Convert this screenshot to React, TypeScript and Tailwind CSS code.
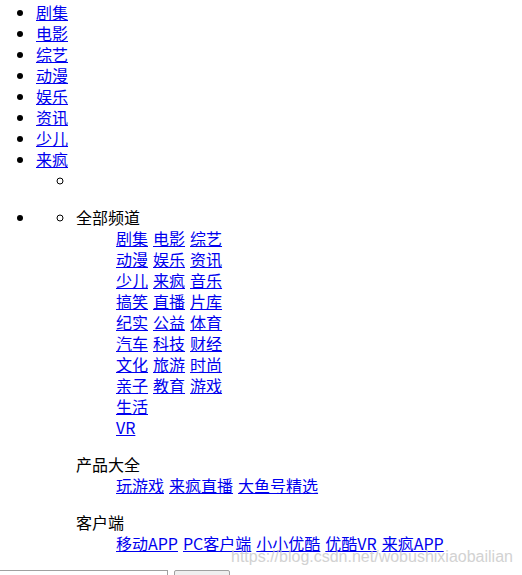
const topNav = ['剧集', '电影', '综艺', '动漫', '娱乐', '资讯', '少儿', '来疯'];

const channelRows = [
  ['剧集', '电影', '综艺'],
  ['动漫', '娱乐', '资讯'],
  ['少儿', '来疯', '音乐'],
  ['搞笑', '直播', '片库'],
  ['纪实', '公益', '体育'],
  ['汽车', '科技', '财经'],
  ['文化', '旅游', '时尚'],
  ['亲子', '教育', '游戏'],
  ['生活'],
  ['VR'],
];

const products = ['玩游戏', '来疯直播', '大鱼号精选'];
const clients = ['移动APP', 'PC客户端', '小小优酷', '优酷VR', '来疯APP'];

function Link({ children }: { children: React.ReactNode }) {
  return (
    <a href="#" className="text-[#0000ee] underline">
      {children}
    </a>
  );
}

function LinkRow({ items }: { items: string[] }) {
  return (
    <div className="flex gap-[5px]">
      {items.map((item) => (
        <Link key={item}>{item}</Link>
      ))}
    </div>
  );
}

export default function App() {
  return (
    <div
      className="relative h-[575px] overflow-hidden bg-white pt-[2px] text-[16px] leading-[21px] text-black"
      style={{ fontFamily: '"Noto Sans CJK SC", "Noto Sans", sans-serif' }}
    >
      <ul className="list-disc pl-9">
        {topNav.map((item, i) => (
          <li key={item}>
            <Link>{item}</Link>
            {i === topNav.length - 1 && (
              <ul className="list-[circle] pl-10">
                <li>&nbsp;</li>
              </ul>
            )}
          </li>
        ))}
      </ul>

      <ul className="mt-4 list-disc pl-9">
        <li>
          <ul className="list-[circle] pl-10">
            <li>
              <dl>
                <dt>全部频道</dt>
                <dd className="ml-10">
                  {channelRows.map((row, i) => (
                    <LinkRow key={i} items={row} />
                  ))}
                </dd>
              </dl>
              <dl className="mt-4">
                <dt>产品大全</dt>
                <dd className="ml-10">
                  <LinkRow items={products} />
                </dd>
              </dl>
              <dl className="mt-4">
                <dt>客户端</dt>
                <dd className="ml-10">
                  <LinkRow items={clients} />
                </dd>
              </dl>
            </li>
          </ul>
        </li>
      </ul>

      <div className="-ml-1 mt-4 flex items-start gap-[6px]">
        <input type="text" className="h-[24px] w-[172px] border border-[#a0a0a0] bg-white" />
        <button className="h-[24px] w-[56px] rounded-[2px] border border-[#a0a0a0] bg-[#efefef]" />
      </div>

      <div
        className="pointer-events-none absolute left-[231px] top-[547px] text-[16px] leading-[20px] text-[#c8c8c8] opacity-80"
        style={{ fontFamily: '"Liberation Sans", Arial, sans-serif' }}
      >
        https://blog.csdn.net/wobushixiaobailian
      </div>
    </div>
  );
}
